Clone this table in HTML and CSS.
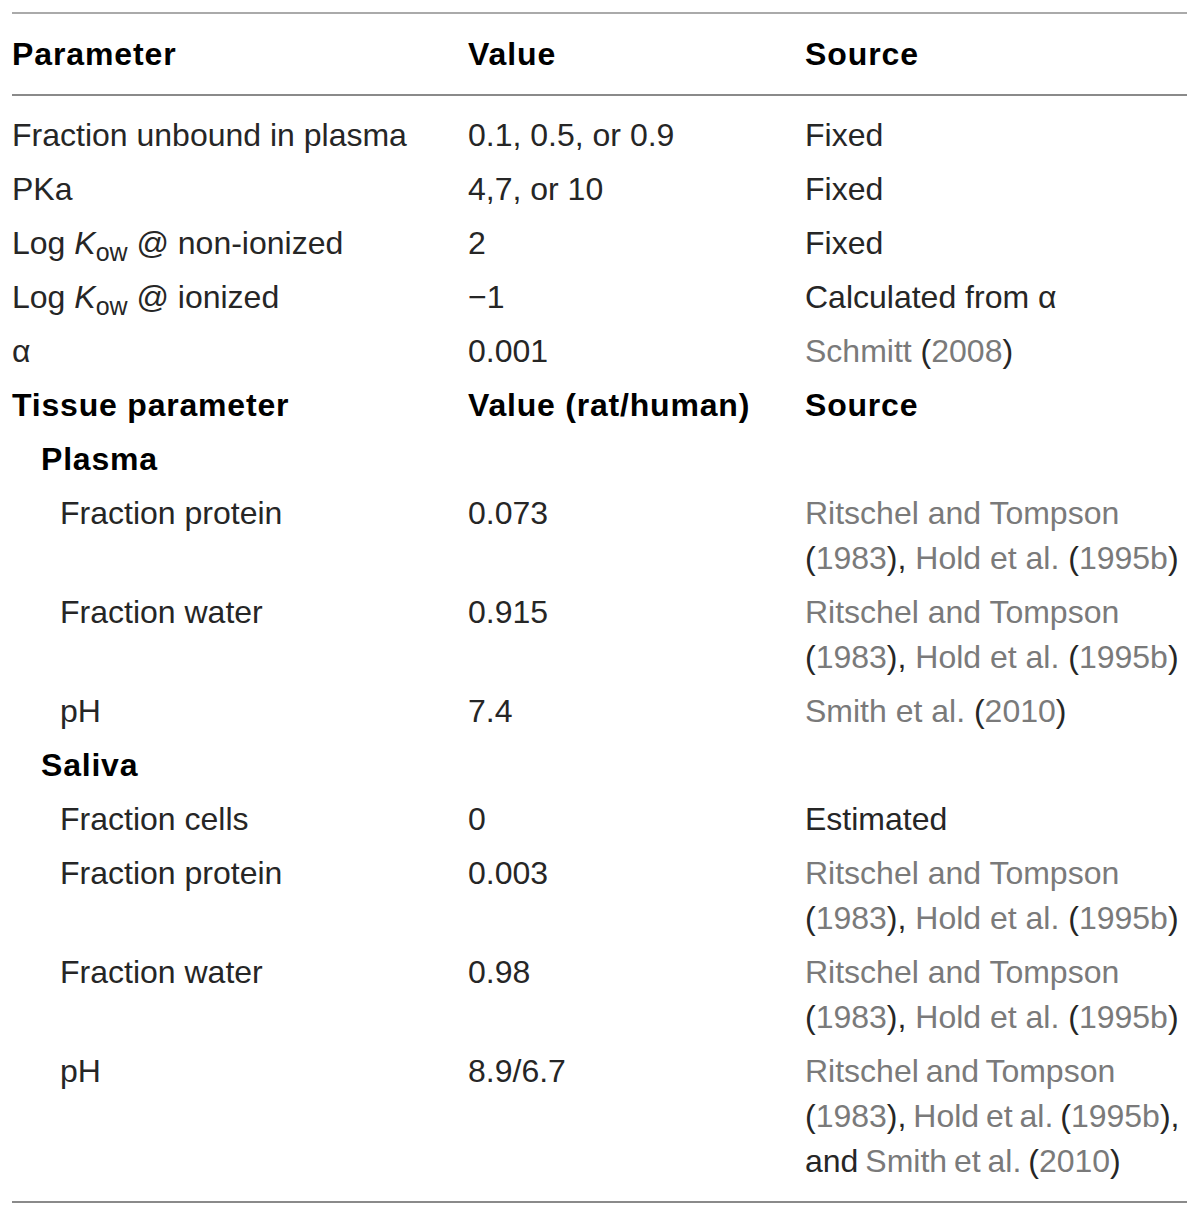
FILE: index.html
```html
<!DOCTYPE html>
<html>
<head>
<meta charset="utf-8">
<link rel="stylesheet" href="styles.css">
</head>
<body>
<div class="wrap">
<table class="params">
  <thead>
    <tr class="head">
      <th class="c1">Parameter</th>
      <th class="c2">Value</th>
      <th class="c3">Source</th>
    </tr>
  </thead>
  <tbody>
    <tr class="first">
      <td>Fraction unbound in plasma</td>
      <td>0.1, 0.5, or 0.9</td>
      <td>Fixed</td>
    </tr>
    <tr>
      <td>PKa</td>
      <td>4,7, or 10</td>
      <td>Fixed</td>
    </tr>
    <tr>
      <td>Log <i>K</i><sub>ow</sub> @ non-ionized</td>
      <td>2</td>
      <td>Fixed</td>
    </tr>
    <tr>
      <td>Log <i>K</i><sub>ow</sub> @ ionized</td>
      <td>−1</td>
      <td>Calculated from α</td>
    </tr>
    <tr>
      <td>α</td>
      <td>0.001</td>
      <td><span class="ref">Schmitt</span> (<span class="ref">2008</span>)</td>
    </tr>
    <tr class="sub-head">
      <td>Tissue parameter</td>
      <td>Value (rat/human)</td>
      <td>Source</td>
    </tr>
    <tr class="group">
      <td class="ind1">Plasma</td>
      <td></td>
      <td></td>
    </tr>
    <tr>
      <td class="ind2">Fraction protein</td>
      <td>0.073</td>
      <td><span class="ref">Ritschel and Tompson</span> (<span class="ref">1983</span>), <span class="ref">Hold et al.</span> (<span class="ref">1995b</span>)</td>
    </tr>
    <tr>
      <td class="ind2">Fraction water</td>
      <td>0.915</td>
      <td><span class="ref">Ritschel and Tompson</span> (<span class="ref">1983</span>), <span class="ref">Hold et al.</span> (<span class="ref">1995b</span>)</td>
    </tr>
    <tr>
      <td class="ind2">pH</td>
      <td>7.4</td>
      <td><span class="ref">Smith et al.</span> (<span class="ref">2010</span>)</td>
    </tr>
    <tr class="group">
      <td class="ind1">Saliva</td>
      <td></td>
      <td></td>
    </tr>
    <tr>
      <td class="ind2">Fraction cells</td>
      <td>0</td>
      <td>Estimated</td>
    </tr>
    <tr>
      <td class="ind2">Fraction protein</td>
      <td>0.003</td>
      <td><span class="ref">Ritschel and Tompson</span> (<span class="ref">1983</span>), <span class="ref">Hold et al.</span> (<span class="ref">1995b</span>)</td>
    </tr>
    <tr>
      <td class="ind2">Fraction water</td>
      <td>0.98</td>
      <td><span class="ref">Ritschel and Tompson</span> (<span class="ref">1983</span>), <span class="ref">Hold et al.</span> (<span class="ref">1995b</span>)</td>
    </tr>
    <tr class="last">
      <td class="ind2">pH</td>
      <td>8.9/6.7</td>
      <td class="tight"><span class="ref">Ritschel and Tompson</span> (<span class="ref">1983</span>), <span class="ref">Hold et al.</span> (<span class="ref">1995b</span>), and <span class="ref">Smith et al.</span> (<span class="ref">2010</span>)</td>
    </tr>
  </tbody>
</table>
</div>
</body>
</html>
```

FILE: styles.css
```css
html, body {
  margin: 0;
  padding: 0;
  background: #ffffff;
}

.wrap {
  padding: 12px 13px 0 12px;
}

.params {
  width: 1175px;
  border-collapse: collapse;
  table-layout: fixed;
  font-family: "Liberation Sans", Arial, sans-serif;
  font-size: 32px;
  line-height: 45px;
  color: #262626;
}

.params th,
.params td {
  padding: 4px 0 5px 0;
  text-align: left;
  vertical-align: top;
  font-weight: normal;
}

.params .c1 { width: 456px; }
.params .c2 { width: 337px; }
.params .c3 { width: 382px; }

.params .head {
  border-top: 2px solid #aaaaaa;
  border-bottom: 2px solid #8a8a8a;
}

.params .head th {
  font-weight: bold;
  letter-spacing: 0.9px;
  color: #000000;
  padding-top: 18px;
  padding-bottom: 17px;
}

.params .first td {
  padding-top: 17px;
}

.params .last {
  border-bottom: 2px solid #8a8a8a;
}

.params .last td {
  padding-bottom: 17px;
}

.params .sub-head td,
.params .group td {
  font-weight: bold;
  letter-spacing: 0.8px;
  color: #000000;
}

.params .tight {
  word-spacing: -2px;
}

.params .ind1 { padding-left: 29px; }
.params .ind2 { padding-left: 48px; }

.params sub {
  font-size: 0.78em;
  line-height: 0;
  vertical-align: -0.3em;
}

.params i {
  font-style: italic;
}

.ref {
  color: #7a7a7a;
}
```
